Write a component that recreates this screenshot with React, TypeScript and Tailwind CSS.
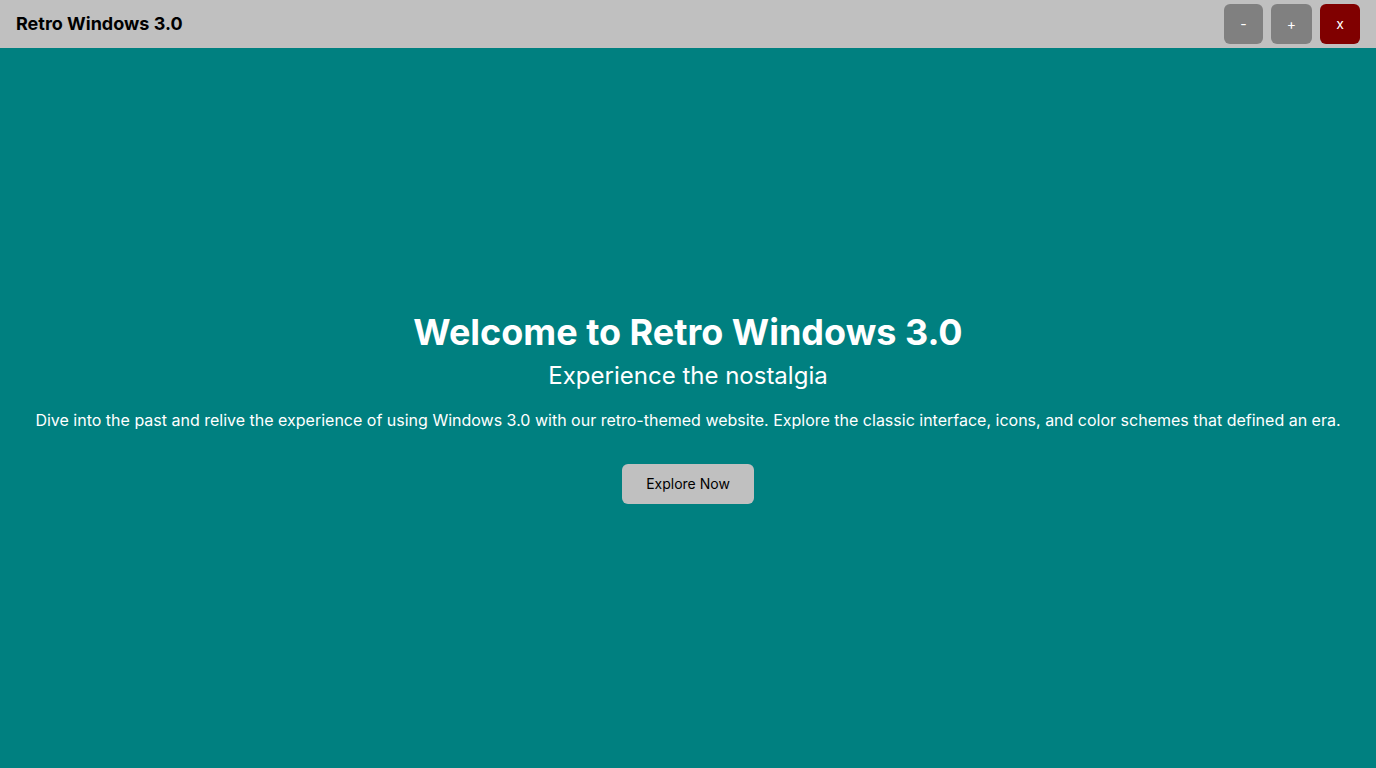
import React from 'react';

const controls = [
  { label: '-', className: 'bg-[#808080] w-[39px]' },
  { label: '+', className: 'bg-[#808080] w-[41px]' },
  { label: 'x', className: 'bg-[#800000] w-10' },
];

export default function App() {
  return (
    <div className="min-h-screen flex flex-col bg-[#008080] font-['Inter',sans-serif]">
      {/* Title bar */}
      <header className="h-12 bg-[#c0c0c0] flex items-center justify-between px-4">
        <h1 className="text-lg font-bold text-black">Retro Windows 3.0</h1>
        <div className="flex items-center gap-2">
          {controls.map(({ label, className }) => (
            <button
              key={label}
              className={`${className} h-10 rounded-md text-sm text-white flex items-center justify-center`}
            >
              {label}
            </button>
          ))}
        </div>
      </header>

      {/* Hero */}
      <main className="flex-1 flex flex-col items-center justify-center text-center text-white px-4">
        <h2 className="text-4xl font-bold mb-2">Welcome to Retro Windows 3.0</h2>
        <p className="text-2xl mb-4">Experience the nostalgia</p>
        <p className="text-base mb-8">
          Dive into the past and relive the experience of using Windows 3.0 with our retro-themed website.
          Explore the classic interface, icons, and color schemes that defined an era.
        </p>
        <button className="bg-[#c0c0c0] text-black text-sm px-6 py-2.5 rounded-md">Explore Now</button>
      </main>
    </div>
  );
}
